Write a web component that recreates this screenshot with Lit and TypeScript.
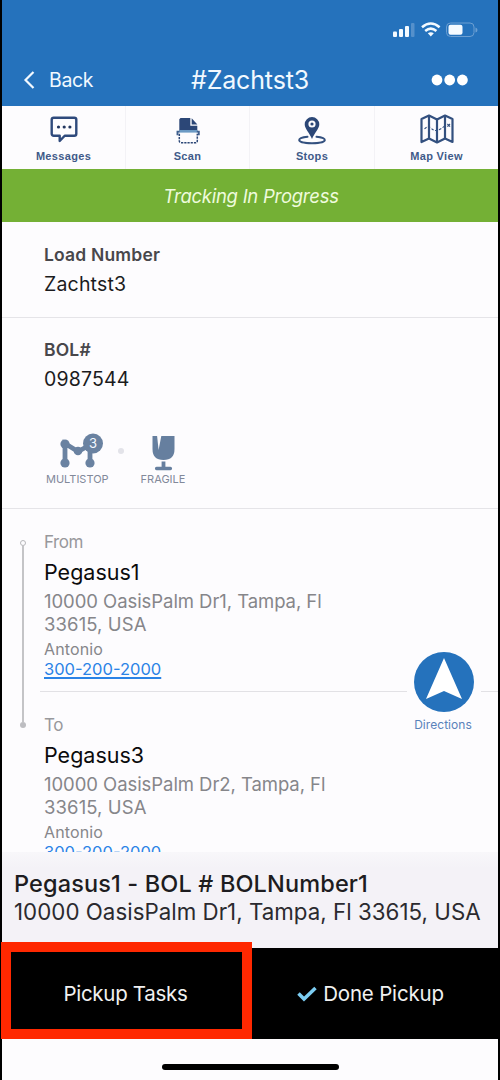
import { LitElement, html, css, svg } from "lit";
import { customElement, state } from "lit/decorators.js";

interface Stop { role: string; name: string; street: string; city: string; contact: string; phone: string; }

const stops: Stop[] = [
  { role: "From", name: "Pegasus1", street: "10000 OasisPalm Dr1, Tampa, Fl", city: "33615, USA", contact: "Antonio", phone: "300-200-2000" },
  { role: "To", name: "Pegasus3", street: "10000 OasisPalm Dr2, Tampa, Fl", city: "33615, USA", contact: "Antonio", phone: "300-200-2000" },
];

const messagesIcon = svg`<svg width="30" height="32" viewBox="0 0 30 32" fill="none" stroke="#2f4a7c" stroke-width="2.4" stroke-linejoin="round">
  <path d="M4.700 3.700h20.600q2 0 2 2v14q0 2-2 2h-9.600l-5 5.300v-5.300h-6q-2 0-2-2v-14q0-2 2-2z"/>
  <g fill="#22365f" stroke="none"><circle cx="9.500" cy="13" r="1.600"/><circle cx="15.200" cy="13" r="1.600"/><circle cx="20.900" cy="13" r="1.600"/></g></svg>`;

const scanIcon = svg`<svg width="30" height="32" viewBox="0 0 30 32">
  <path d="M7.500 4h9.800v7.700h7v6h-18v-12.500z" fill="#2c4777"/><path d="M18.700 4.200l5.700 6.200h-5.700z" fill="#2c4777"/>
  <path d="M6.200 17.300h18.200" stroke="#6c9ac4" stroke-width="2.600"/>
  <path d="M6.500 17.600h-2v3.600M23.800 17.600h2v3.600" fill="none" stroke="#3f5f8e" stroke-width="1.900"/>
  <path d="M6.300 19.800v7q0 2 2 2h14q2 0 2-2v-7" fill="none" stroke="#2c4777" stroke-width="1.500" stroke-dasharray="2.200 1"/></svg>`;

const stopsIcon = svg`<svg width="30" height="32" viewBox="0 0 30 32">
  <path d="M10.500 22.800c-5 .5-8.300 1.700-8.300 3.200 0 2 5.700 3.200 12.800 3.200s12.800-1.200 12.800-3.200c0-1.500-3.300-2.700-8.300-3.200" fill="none" stroke="#33507f" stroke-width="2" stroke-linecap="round"/>
  <path fill-rule="evenodd" d="M15 3a7.300 7.300 0 0 1 7.300 7.300c0 4.500-4.800 8.700-7.300 14.700-2.500-6-7.300-10.200-7.300-14.700a7.300 7.300 0 0 1 7.300-7.300zm0 3.400a3.600 3.600 0 1 0 0 7.200 3.600 3.600 0 1 0 0-7.200z" fill="#2c4777"/>
  <circle cx="15" cy="10" r="1.600" fill="#2c4777"/></svg>`;

const mapIcon = svg`<svg width="36" height="32" viewBox="0 0 36 32" fill="none" stroke="#33507f" stroke-width="2.200" stroke-linejoin="round">
  <path d="M2.500 5l7.500-3.500 8 4 8-4 7.500 3.500v23l-7.500-3.500-8 4-8-4-7.500 3.500z"/><path d="M10 1.500v23M18 5.500v23M26 1.500v23"/>
  <path d="M5.500 15q3.500-4 7-.5t8 1 6-4.500" stroke-width="1.100" stroke-dasharray="2.500 1.500"/><path d="M28.400 10l2.600 2.600m0-2.600l-2.600 2.600" stroke-width="1.200"/></svg>`;

@customElement("app-root")
export class AppRoot extends LitElement {
  @state() private loadNumber = "Zachtst3";
  @state() private bol = "0987544";

  static styles = css`
    :host { display: block; width: 500px; height: 1080px; background: #000; font-family: Inter, "Liberation Sans", sans-serif; color: #111; }
    * { box-sizing: border-box; }
    svg { display: block; flex: none; }
    .screen { width: 496px; height: 1080px; margin: 0 2px; background: #fdfcfe; display: flex; flex-direction: column; }
    .head { height: 106px; flex: none; background: #2572bc; color: #f2f9ff; display: flex; flex-direction: column; }
    .status { height: 54px; padding: 22px 20px 0 0; display: flex; justify-content: flex-end; }
    .nav { height: 52px; display: grid; grid-template-columns: 130px 1fr 130px; align-items: center; }
    .back { display: flex; align-items: center; gap: 14px; padding-left: 21px; font-size: 19.500px; letter-spacing: -.35px; }
    .title { font-size: 25px; text-align: center; letter-spacing: -.15px; }
    .more { display: flex; justify-content: flex-end; padding-right: 29px; }
    .tabs { height: 63px; flex: none; display: grid; grid-template-columns: 124px 124px 125px 123px; }
    .tab { display: flex; flex-direction: column; align-items: center; padding-top: 8px; border-right: 1px solid #f3f2f6; }
    .tab:last-child { border: 0; }
    .tab span { font: 700 11px/13px "Liberation Sans", sans-serif; letter-spacing: .33px; color: #3f5a89; margin-top: 4px; white-space: nowrap; }
    .banner { height: 53px; flex: none; background: #74b035; color: #eefbdc; font-size: 18.500px; letter-spacing: -.26px; font-style: italic; line-height: 54px; text-align: center; padding-left: 2px; }
    .field { flex: none; border-bottom: 1px solid #e5e4e8; padding: 20px 0 0 42px; }
    .load { height: 96px; }
    .bol { height: 191px; padding-top: 19px; }
    .label { font-size: 17.500px; line-height: 26px; font-weight: 600; color: #48474b; letter-spacing: .18px; }
    .value { font-size: 19.500px; line-height: 32px; color: #1b1b1d; letter-spacing: .18px; }
    .traits { display: flex; margin-top: 38px; align-items: flex-start; padding-left: 2px; }
    .trait { display: flex; flex-direction: column; align-items: center; color: #82899a; font-size: 11px; line-height: 16px; }
    .badge { font-size: 13px; fill: #f4f8ff; }
    .dot { width: 6px; height: 6px; border-radius: 50%; background: #e3e3e9; margin: 15px 17px 0 9px; }
    .route { height: 343px; flex: none; overflow: hidden; display: grid; grid-template-columns: 38px 1fr; position: relative; }
    .rail { display: flex; flex-direction: column; align-items: center; padding: 31px 0 0 4px; height: 219px; }
    .ring { width: 6px; height: 6px; border: 1px solid #b7b7bb; border-radius: 50%; flex: none; }
    .line { width: 1.500px; flex: 1; background: #c4c4c7; }
    .end { width: 6px; height: 6px; border-radius: 50%; background: #bdbdc1; flex: none; }
    .stop { height: 183px; padding: 20px 0 0 4px; border-bottom: 1px solid #e2e1e5; color: #86868a; }
    .stop:last-child { border: 0; }
    .role { font-size: 17px; line-height: 26px; color: #98989c; letter-spacing: -.45px; }
    .name { font-size: 21.500px; line-height: 34px; color: #0b0b0c; }
    .addr { font-size: 18.500px; line-height: 23px; margin-top: 1px; letter-spacing: -.06px; }
    .city { letter-spacing: .1px; }
    .contact { font-size: 16px; line-height: 20px; margin-top: 3px; letter-spacing: .12px; }
    .phone { display: block; width: max-content; font-size: 16.500px; line-height: 20px; color: #2b83e6; text-decoration: underline; text-decoration-thickness: 1.500px; text-underline-offset: 1.500px; }
    .directions { position: absolute; right: 17px; top: 143px; width: 74px; display: flex; flex-direction: column; align-items: center; color: #5a82ba; font-size: 12px; letter-spacing: .05px; line-height: 16px; gap: 5px; background: #fdfcfe; }
    .directions span { padding-right: 2px; }
    .current { height: 96px; flex: none; background: linear-gradient(#f8f7fa, #f4f2f7 16px); padding: 18px 0 0 12px; white-space: nowrap; }
    .current-name { font-size: 23.500px; line-height: 28px; font-weight: 500; color: #1d1c20; letter-spacing: .14px; }
    .current-addr { font-size: 22.300px; line-height: 28px; color: #2b2a2f; letter-spacing: .03px; }
    .actions { height: 91px; flex: none; background: #000; color: #f1f1f1; display: grid; grid-template-columns: 250px 246px; position: relative; font-size: 20.500px; }
    .action { display: flex; align-items: center; justify-content: center; gap: 6px; letter-spacing: -.3px; padding: 0 3px 0 0; }
    .done { letter-spacing: -.18px; padding-right: 9px; }
    .highlight { position: absolute; left: -1px; top: -6px; width: 251px; height: 97px; border: 10px solid #ff2800; }
    .home { flex: 1; display: flex; justify-content: center; padding-top: 25px; }
    .home i { width: 177px; height: 6px; border-radius: 3px; background: #000; }
  `;

  private stop(s: Stop) {
    return html`<div class="stop">
      <div class="role">${s.role}</div><div class="name">${s.name}</div>
      <div class="addr">${s.street}<br /><span class="city">${s.city}</span></div>
      <div class="contact">${s.contact}</div><a class="phone">${s.phone}</a></div>`;
  }

  render() {
    return html`<div class="screen">
      <header class="head">
        <div class="status"><svg width="86" height="16" viewBox="0 0 86 16" fill="#f4faff">
          <rect x="1" y="9.500" width="4" height="5.500" rx="1"/><rect x="7" y="7" width="4" height="8" rx="1"/><rect x="13" y="4" width="4" height="11" rx="1"/><rect x="19" y="1" width="3.500" height="14" rx="1" fill="#5590cb"/>
          <g fill="none" stroke="#f4faff" stroke-width="2.500"><path d="M30 5.300q8.800-7.600 17.600 0"/><path d="M33.200 9q5.600-4.800 11.200 0"/></g><path d="M35.800 11.300q3-2.300 6 0l-3 3.300z"/>
          <rect x="54.500" y="1" width="27.500" height="13.500" rx="4" fill="none" stroke="#6c9fd2"/><rect x="56.500" y="2.700" width="14" height="10" rx="2"/><path d="M83.500 5.500q2 .5 2 2.500t-2 2.500z" fill="#6c9fd2"/></svg></div>
        <div class="nav">
          <div class="back"><svg width="12" height="18" viewBox="0 0 12 18" fill="none" stroke="#f2f9ff" stroke-width="2.200"><path d="M10.500 1L2.500 9l8 8"/></svg><span>Back</span></div>
          <div class="title">#${this.loadNumber}</div>
          <div class="more"><svg width="38" height="12" viewBox="0 0 38 12" fill="#fff"><circle cx="6" cy="6" r="5.400"/><circle cx="18.700" cy="6" r="5.400"/><circle cx="31.400" cy="6" r="5.400"/></svg></div>
        </div>
      </header>
      <nav class="tabs">
        <div class="tab">${messagesIcon}<span>Messages</span></div>
        <div class="tab">${scanIcon}<span>Scan</span></div>
        <div class="tab">${stopsIcon}<span>Stops</span></div>
        <div class="tab">${mapIcon}<span>Map View</span></div>
      </nav>
      <div class="banner">Tracking In Progress</div>
      <section class="field load"><div class="label">Load Number</div><div class="value">${this.loadNumber}</div></section>
      <section class="field bol"><div class="label">BOL#</div><div class="value">${this.bol}</div>
        <div class="traits">
          <div class="trait"><svg width="62" height="38" viewBox="0 0 62 38"><path d="M19 30V10.500l13 8L44 12v18" fill="none" stroke="#6a82a1" stroke-width="4.800"/><g fill="#6a82a1"><circle cx="19" cy="11" r="4.600"/><circle cx="19" cy="30" r="4.600"/><circle cx="44" cy="30" r="4.600"/><circle cx="32" cy="18" r="4.300"/><circle cx="47" cy="10.500" r="10"/></g><text class="badge" x="47" y="15.200" text-anchor="middle">3</text></svg><span>MULTISTOP</span></div>
          <span class="dot"></span>
          <div class="trait"><svg width="44" height="38" viewBox="0 0 44 38" fill="#667f9f"><path d="M11.500 3h4.600l1.500 14L20.300 3h13.200v13q0 11-11 11t-11-11z"/><path d="M20.600 28.500h3.800v5.300h5q1.700 0 1.700 1.700t-1.700 1.700h-13.800q-1.700 0-1.700-1.700t1.700-1.700h5z"/></svg><span>FRAGILE</span></div>
        </div>
      </section>
      <section class="route">
        <div class="rail"><i class="ring"></i><i class="line"></i><i class="end"></i></div>
        <div>${stops.map((s) => this.stop(s))}</div>
        <div class="directions"><svg width="60" height="60" viewBox="0 0 60 60"><circle cx="30" cy="30" r="30" fill="#2572bc"/><path d="M30 6l18 41-18-8-18 8z" fill="#fff"/></svg><span>Directions</span></div>
      </section>
      <section class="current"><div class="current-name">Pegasus1 - BOL # BOLNumber1</div><div class="current-addr">10000 OasisPalm Dr1, Tampa, Fl 33615, USA</div></section>
      <div class="actions"><div class="action"><span>Pickup Tasks</span></div>
        <div class="action done"><svg width="20" height="16" viewBox="0 0 20 16" fill="none" stroke="#7ccdf2" stroke-width="3.500"><path d="M1.500 7.500l5.500 5.500L18.500 2"/></svg><span>Done Pickup</span></div>
        <div class="highlight"></div></div>
      <div class="home"><i></i></div>
    </div>`;
  }
}
